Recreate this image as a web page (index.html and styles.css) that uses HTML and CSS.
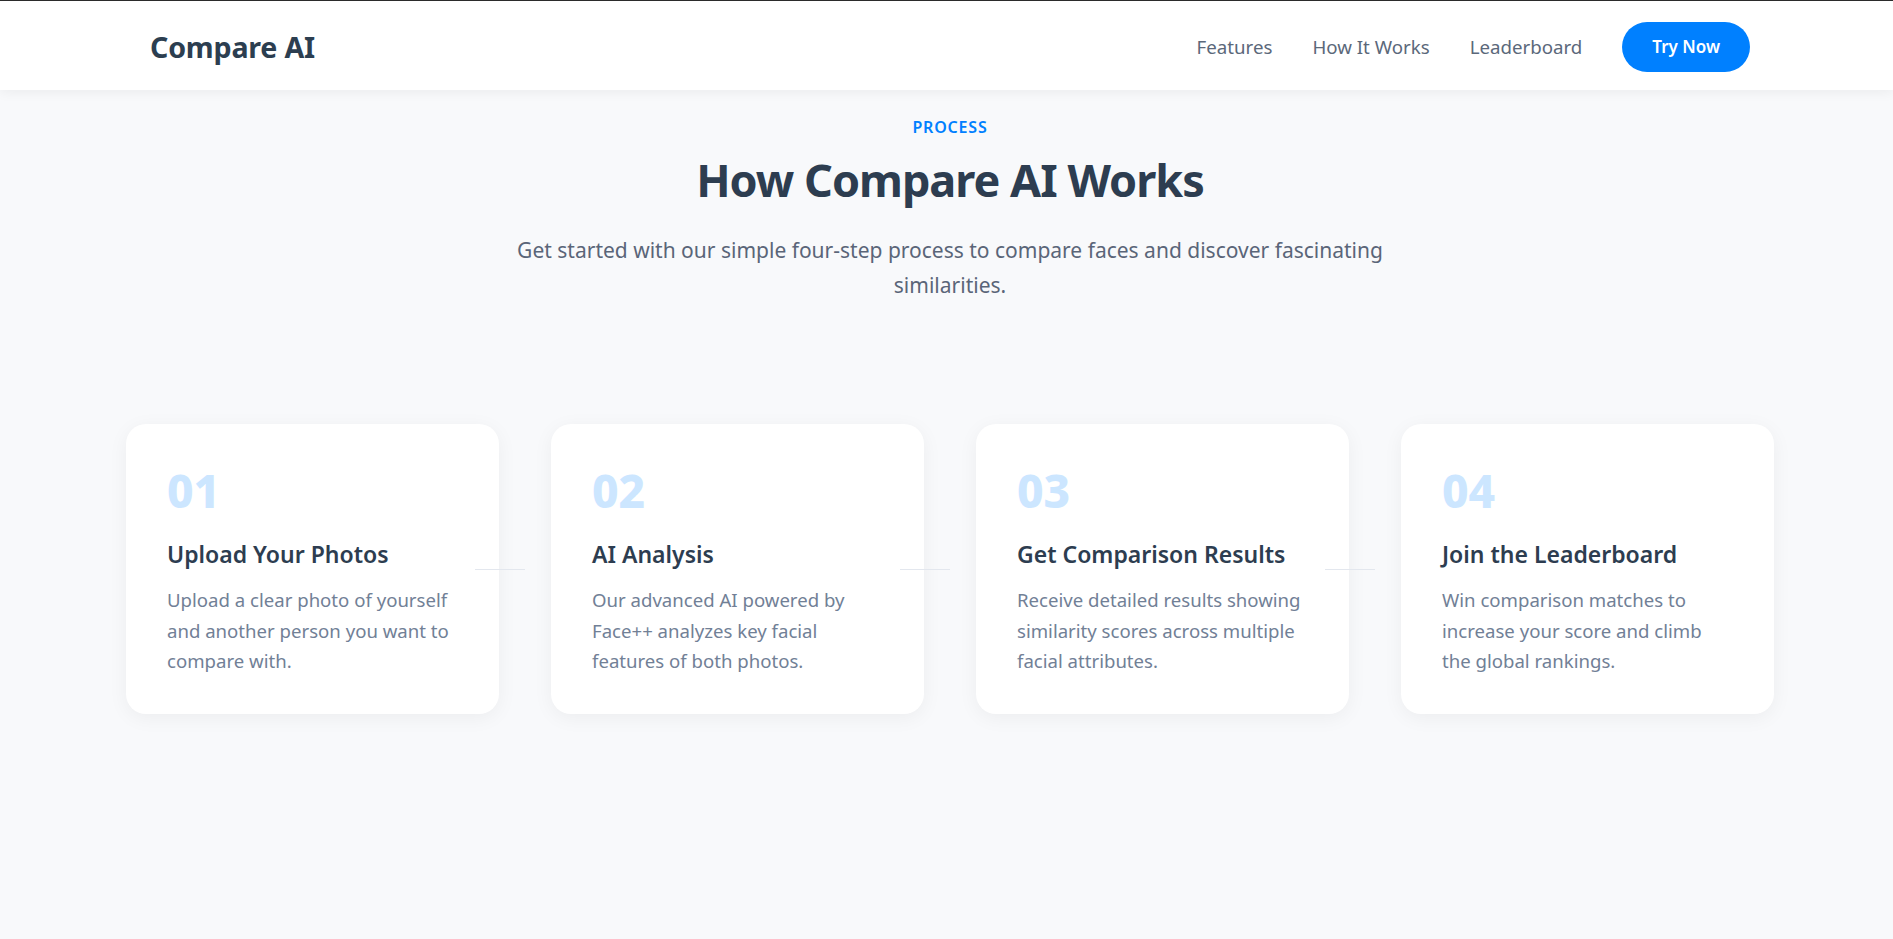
FILE: index.html
```html
<!DOCTYPE html>
<html lang="en">
<head>
<meta charset="utf-8">
<title>Compare AI – How It Works</title>
<link rel="stylesheet" href="styles.css">
</head>
<body>
<header class="site-header">
  <div class="nav-inner">
    <a class="logo" href="#">Compare AI</a>
    <nav class="nav">
      <a class="nav-link" href="#">Features</a>
      <a class="nav-link" href="#">How It Works</a>
      <a class="nav-link" href="#">Leaderboard</a>
      <a class="btn-try" href="#">Try Now</a>
    </nav>
  </div>
</header>
<main class="how">
  <div class="section-head">
    <span class="eyebrow">PROCESS</span>
    <h2 class="section-title">How Compare AI Works</h2>
    <p class="section-sub">Get started with our simple four-step process to compare faces and discover fascinating similarities.</p>
  </div>
  <div class="steps">
    <div class="step">
      <div class="step-num">01</div>
      <h3 class="step-title">Upload Your Photos</h3>
      <p class="step-text">Upload a clear photo of yourself and another person you want to compare with.</p>
    </div>
    <div class="step">
      <div class="step-num">02</div>
      <h3 class="step-title">AI Analysis</h3>
      <p class="step-text">Our advanced AI powered by Face++ analyzes key facial features of both photos.</p>
    </div>
    <div class="step">
      <div class="step-num">03</div>
      <h3 class="step-title">Get Comparison Results</h3>
      <p class="step-text">Receive detailed results showing similarity scores across multiple facial attributes.</p>
    </div>
    <div class="step">
      <div class="step-num">04</div>
      <h3 class="step-title">Join the Leaderboard</h3>
      <p class="step-text">Win comparison matches to increase your score and climb the global rankings.</p>
    </div>
  </div>
</main>
</body>
</html>
```
FILE: styles.css
```css
* { box-sizing: border-box; }
html, body { margin: 0; padding: 0; }
body {
  background: #f8f9fb;
  font-family: "Noto Sans", "Open Sans", sans-serif;
  color: #2c3e50;
  min-height: 939px;
}
a { text-decoration: none; }

.site-header {
  background: #fff;
  border-top: 1px solid #2b2b2b;
  box-shadow: 0 2px 12px rgba(0, 0, 0, 0.06);
  padding-left: 7px;
  position: relative;
  z-index: 2;
}
.nav-inner {
  max-width: 1600px;
  height: 89px;
  padding-top: 2px;
  margin: 0 auto;
  display: flex;
  align-items: center;
  justify-content: space-between;
}
.logo {
  font-size: 28.6px;
  font-weight: 700;
  color: #2c3e50;
  letter-spacing: -0.2px;
}
.nav {
  display: flex;
  align-items: center;
  gap: 40px;
}
.nav-link {
  font-size: 18.7px;
  color: #5b687a;
}
.btn-try {
  background: #0080ff;
  color: #fff;
  font-size: 17px;
  font-weight: 600;
  line-height: 26px;
  padding: 12px 30px;
  border-radius: 30px;
}

.how {
  padding-left: 7px;
  padding-top: 25px;
}
.section-head {
  display: flex;
  flex-direction: column;
  align-items: center;
  text-align: center;
}
.eyebrow {
  font-size: 16px;
  font-weight: 600;
  color: #0080ff;
  letter-spacing: 0.8px;
  line-height: 24px;
}
.section-title {
  margin: 11px 0 0;
  font-size: 45px;
  font-weight: 700;
  letter-spacing: -1px;
  line-height: 60px;
  color: #2d3d50;
}
.section-sub {
  margin: 23px 0 0;
  max-width: 900px;
  font-size: 21px;
  line-height: 35px;
  color: #5a6578;
}

.steps {
  max-width: 1648px;
  margin: 121px auto 0;
  display: grid;
  grid-template-columns: repeat(4, 1fr);
  gap: 52px;
}
.step {
  position: relative;
  background: #fff;
  border-radius: 20px;
  padding: 42px 46px 39px 41px;
  height: 290px;
  box-shadow: 0 4px 20px rgba(0, 0, 0, 0.05);
}
.step:not(:last-child)::after {
  content: "";
  position: absolute;
  top: 50%;
  right: -26px;
  width: 50px;
  height: 1px;
  background: #e3e7ee;
}
.step-num {
  font-size: 46px;
  font-weight: 800;
  line-height: 48px;
  color: #cce6ff;
}
.step-title {
  margin: 25px 0 0;
  font-size: 23px;
  font-weight: 600;
  line-height: 30px;
  color: #2d3d50;
}
.step-text {
  margin: 16px 0 0;
  font-size: 18.6px;
  line-height: 30.5px;
  color: #718096;
}
```
